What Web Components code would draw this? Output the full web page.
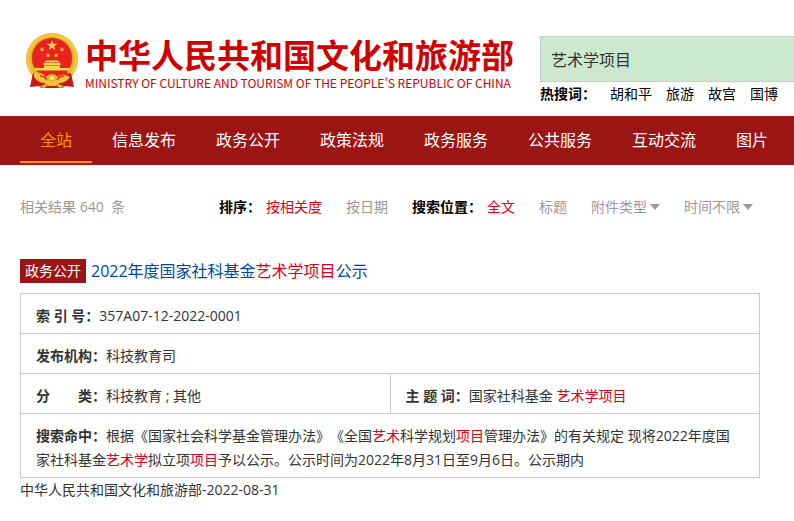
<!DOCTYPE html>
<html lang="zh-CN">
<head>
<meta charset="utf-8">
<title>中华人民共和国文化和旅游部</title>
<style>
  :root {
    --brand: #9c1515;
    --hit: #d9001b;
    --line: #ccc;
    --muted: #999;
  }
  body {
    margin: 0;
    background: #fff;
    color: #333;
    font: 14px/24px "Open Sans", "Noto Sans CJK SC", sans-serif;
    text-spacing-trim: space-all;
  }
  header {
    display: flex;
    align-items: flex-start;
    gap: 26px;
    height: 116px;
    padding-left: 24px;
    box-sizing: border-box;
  }
  main {
    padding: 30px 34px 20px 20px;
  }
</style>
</head>
<body>
  <header>
    <site-logo></site-logo>
    <search-box value="艺术学项目" words="胡和平,旅游,故宫,国博"></search-box>
  </header>
  <site-nav items="全站,信息发布,政务公开,政策法规,政务服务,公共服务,互动交流,图片"></site-nav>
  <main>
    <filter-bar total="640"></filter-bar>
    <search-result tag="政务公开">
      <span slot="title">2022年度国家社科基金<hit-word>艺术学项目</hit-word>公示</span>
      <span slot="index">357A07-12-2022-0001</span>
      <span slot="agency">科技教育司</span>
      <span slot="category">科技教育 ; 其他</span>
      <span slot="keywords">国家社科基金 <hit-word>艺术学项目</hit-word></span>
      <span slot="excerpt">根据《国家社会科学基金管理办法》《全国<hit-word>艺术</hit-word>科学规划<hit-word>项目</hit-word>管理办法》的有关规定 现将2022年度国家社科基金<hit-word>艺术学</hit-word>拟立项<hit-word>项目</hit-word>予以公示。公示时间为2022年8月31日至9月6日。公示期内</span>
      <span slot="source">中华人民共和国文化和旅游部-2022-08-31</span>
    </search-result>
  </main>

<script>
customElements.define(
  "hit-word",
  class extends HTMLElement {
    constructor() {
      super()
      // kept on one line, whitespace here would show up between the characters
      this.attachShadow({ mode: 'open' }).innerHTML = `<style>:host { display: inline; color: var(--hit); }</style><slot></slot>`;
    }
  }
);

customElements.define(
  "site-logo",
  class extends HTMLElement {
    constructor() {
      super()
      this.attachShadow({ mode: 'open' }).innerHTML = `
        <style>
        :host {
          display: flex;
          flex: none;
          gap: 5px;
          padding-top: 31px;
          color: #cf0000;
        }
        svg { display: block; flex: none; }
        .name {
          font: bold 33px/46px "Noto Sans CJK SC", sans-serif;
          white-space: nowrap;
        }
        .sub {
          font: 12px/12px "Noto Sans CJK SC", sans-serif;
          white-space: nowrap;
        }
        </style>
        <svg width="56" height="60" viewBox="0 0 56 60" aria-hidden="true">
          <circle cx="28" cy="28" r="26" fill="#edb62c"/>
          <circle cx="28" cy="28" r="24" fill="none" stroke="#f4cb48" stroke-width="2"/>
          <circle cx="28" cy="27" r="20.5" fill="#c99320"/>
          <circle cx="28" cy="27" r="20" fill="#e8231f"/>
          <g fill="#f7d54a">
            <path d="M28 9l1.3 3.8h4l-3.2 2.4 1.2 3.8-3.3-2.3-3.3 2.3 1.2-3.8-3.2-2.4h4z"/>
            <path d="M18 16l.6 1.7h1.8l-1.4 1 .5 1.8-1.5-1-1.5 1 .5-1.8-1.4-1h1.8z"/>
            <path d="M38 16l.6 1.7h1.8l-1.4 1 .5 1.8-1.5-1-1.5 1 .5-1.8-1.4-1h1.8z"/>
            <path d="M24 22l.6 1.7h1.8l-1.4 1 .5 1.8-1.5-1-1.5 1 .5-1.8-1.4-1h1.8z"/>
            <path d="M32 22l.6 1.7h1.8l-1.4 1 .5 1.8-1.5-1-1.5 1 .5-1.8-1.4-1h1.8z"/>
            <path d="M21 31l1-1.5h12l1 1.5zM19 34l1-2.5h16l1 2.5zM20 34.5h16v2.5h9.500l-1 2.500h-33l-1-2.500H20z"/>
          </g>
          <path d="M12 41h32l-4 5-12 3-12-3z" fill="#e8231f"/>
          <path d="M9 42l9 2 10 7 10-7 9-2 3 14-9-1-2 2H17l-2-2-9 1z" fill="#c91518"/>
          <path d="M10 41q8 0 12 5 6-6 12 0 4-5 12 0-4 6-11 6l-3 3h-8l-3-3q-7 0-11-6z" fill="#f1c23a"/>
          <path d="M16 45q5 0 7 4M40 45q-5 0-7 4" fill="none" stroke="#d6341f" stroke-width="1.5"/>
          <circle cx="28" cy="47" r="3" fill="#fbe37a" stroke="#dca02a"/>
          <path d="M15 56l6-3h3l-3 4zM41 56l-6-3h-3l3 4z" fill="#edb62c"/>
        </svg>
        <div>
          <div class="name">中华人民共和国文化和旅游部</div>
          <div class="sub">MINISTRY OF CULTURE AND TOURISM OF THE PEOPLE'S REPUBLIC OF CHINA</div>
        </div>
      `;
    }
  }
);

customElements.define(
  "search-box",
  class extends HTMLElement {
    constructor() {
      super()
      this.attachShadow({ mode: 'open' }).innerHTML = `
        <style>
        :host {
          display: block;
          flex: 1;
          min-width: 0;
          padding-top: 36px;
        }
        input {
          display: block;
          box-sizing: border-box;
          width: 100%;
          height: 46px;
          padding: 0 10px;
          border: 1px solid var(--line);
          border-right: 0;
          border-radius: 0;
          outline: 0;
          background: #cce8cf;
          color: #333;
          font: inherit;
          font-size: 16px;
        }
        .hot {
          display: flex;
          gap: 14px;
          color: #000;
          white-space: nowrap;
        }
        a { color: inherit; text-decoration: none; }
        </style>
        <input type="text" aria-label="搜索">
        <div class="hot"><b>热搜词：</b></div>
      `;
    }

    connectedCallback() {
      this.shadowRoot.querySelector('input').value = this.getAttribute("value")
      const hot = this.shadowRoot.querySelector('.hot')
      this.getAttribute("words").split(",").forEach((word) => {
        hot.insertAdjacentHTML('beforeend', `<a href="#">${word}</a>`)
      })
    }
  }
);

customElements.define(
  "site-nav",
  class extends HTMLElement {
    constructor() {
      super()
      this.attachShadow({ mode: 'open' }).innerHTML = `
        <style>
        :host {
          display: block;
          padding: 3px 0 2px 20px;
          background: var(--brand);
        }
        nav { display: flex; }
        a {
          flex: none;
          padding: 0 20px;
          border-bottom: 2px solid transparent;
          color: #fff;
          font-size: 16px;
          line-height: 42px;
          text-decoration: none;
        }
        a[aria-current] {
          border-color: #ff9000;
          color: #ff9000;
        }
        </style>
        <nav></nav>
      `;
    }

    connectedCallback() {
      this.shadowRoot.querySelector('nav').innerHTML = this.getAttribute("items").split(",")
        .map((item, i) => `<a href="#"${i ? '' : ' aria-current="page"'}>${item}</a>`)
        .join('')
    }
  }
);

customElements.define(
  "drop-down",
  class extends HTMLElement {
    constructor() {
      super()
      this.attachShadow({ mode: 'open' }).innerHTML = `
        <style>
        :host {
          display: flex;
          align-items: center;
          gap: 3px;
        }
        select {
          appearance: none;
          field-sizing: content;
          margin: 0;
          padding: 0;
          border: 0;
          background: none;
          color: inherit;
          font: inherit;
        }
        svg { display: block; }
        </style>
        <select><option></option></select>
        <svg width="10" height="6" viewBox="0 0 10 6" aria-hidden="true"><path d="M0 0h10L5 6z" fill="currentColor"/></svg>
      `;
    }

    connectedCallback() {
      const label = this.getAttribute("label")
      this.shadowRoot.querySelector('select').setAttribute('aria-label', label)
      this.shadowRoot.querySelector('option').textContent = label
    }
  }
);

customElements.define(
  "filter-bar",
  class extends HTMLElement {
    constructor() {
      super()
      this.attachShadow({ mode: 'open' }).innerHTML = `
        <style>
        :host {
          display: flex;
          gap: 24px;
          color: var(--muted);
          white-space: nowrap;
        }
        .total { flex: 0 0 175px; white-space: pre; }
        .group { display: flex; gap: 24px; }
        .first { display: flex; gap: 5px; }
        b { color: #000; }
        a { color: inherit; text-decoration: none; }
        a[aria-current] { color: var(--hit); }
        </style>
        <div class="total"></div>
        <div class="group">
          <span class="first"><b>排序：</b><a href="#" aria-current="true">按相关度</a></span>
          <a href="#">按日期</a>
        </div>
        <div class="group">
          <span class="first"><b>搜索位置：</b><a href="#" aria-current="true">全文</a></span>
          <a href="#">标题</a>
          <drop-down label="附件类型"></drop-down>
          <drop-down label="时间不限"></drop-down>
        </div>
      `;
    }

    connectedCallback() {
      this.shadowRoot.querySelector('.total').textContent = `相关结果 ${this.getAttribute("total")}  条`
    }
  }
);

customElements.define(
  "search-result",
  class extends HTMLElement {
    constructor() {
      super()
      this.attachShadow({ mode: 'open' }).innerHTML = `
        <style>
        :host {
          display: block;
          padding-top: 40px;
        }
        h3 {
          display: flex;
          gap: 5px;
          margin: 0 0 10px;
          font-size: 16px;
          font-weight: normal;
        }
        .tag {
          padding: 0 5px;
          background: var(--brand);
          color: #fff;
          font-size: 14px;
        }
        a { color: #00479d; text-decoration: none; }
        table {
          width: 100%;
          table-layout: fixed;
          border-collapse: collapse;
        }
        td {
          padding: 10px 20px 5px 15px;
          border: 1px solid var(--line);
          vertical-align: top;
        }
        b { white-space: pre; }
        </style>
        <h3><span class="tag"></span><a href="#"><slot name="title"></slot></a></h3>
        <table>
          <tr><td colspan="2"><b>索 引 号：</b><slot name="index"></slot></td></tr>
          <tr><td colspan="2"><b>发布机构：</b><slot name="agency"></slot></td></tr>
          <tr>
            <td><b>分　　类：</b><slot name="category"></slot></td>
            <td><b>主 题 词：</b><slot name="keywords"></slot></td>
          </tr>
          <tr><td colspan="2"><b>搜索命中：</b><slot name="excerpt"></slot></td></tr>
        </table>
        <slot name="source"></slot>
      `;
    }

    connectedCallback() {
      this.shadowRoot.querySelector('.tag').textContent = this.getAttribute("tag")
    }
  }
);
</script>
</body>
</html>
